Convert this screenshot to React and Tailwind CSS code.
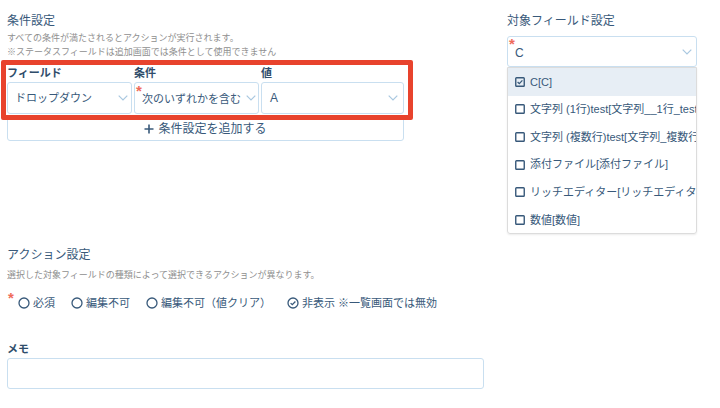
import React from "react";

const Chevron = ({ className = "" }) => (
  <svg width="10" height="6" viewBox="0 0 10 6" className={className}>
    <polyline points="0.7,0.7 5,5 9.3,0.7" fill="none" stroke="#a9c8e0" strokeWidth="1.2" />
  </svg>
);

const Asterisk = ({ className = "" }) => (
  <span className={"absolute text-[#ef6b5b] text-[15px] leading-[15px] font-bold font-['Liberation_Sans',sans-serif] " + className}>*</span>
);

const Radio = () => (
  <svg width="12" height="12" viewBox="0 0 12 12">
    <circle cx="6" cy="6" r="5" fill="none" stroke="#38597a" strokeWidth="1.3" />
  </svg>
);

const CheckCircle = () => (
  <svg width="12" height="12" viewBox="0 0 12 12">
    <circle cx="6" cy="6" r="5" fill="none" stroke="#38597a" strokeWidth="1.3" />
    <polyline points="3.6,6.1 5.3,7.7 8.4,4.5" fill="none" stroke="#38597a" strokeWidth="1.3" />
  </svg>
);

const Box = ({ checked }) => (
  <svg width="10" height="10" viewBox="0 0 10 10" className="shrink-0">
    <rect x="0.75" y="0.75" width="8.5" height="8.5" rx="0.8" fill="none" stroke="#38597a" strokeWidth="1.4" />
    {checked && <polyline points="2.6,5 4.3,6.6 7.4,3.4" fill="none" stroke="#38597a" strokeWidth="1.3" />}
  </svg>
);

const items = [
  { t: "C[C]", c: true },
  { t: "文字列 (1行)test[文字列__1行_test]" },
  { t: "文字列 (複数行)test[文字列_複数行_test]" },
  { t: "添付ファイル[添付ファイル]" },
  { t: "リッチエディター[リッチエディター]" },
  { t: "数値[数値]" },
];

export default function App() {
  return (
    <div className="relative w-[720px] h-[408px] bg-white overflow-hidden flex font-['Liberation_Sans','Noto_Sans_CJK_JP',sans-serif] text-[#38597a]">
      {/* Left column */}
      <div className="w-[484px] pl-[7px] pt-[11px] flex flex-col">
        <div className="text-[12px] leading-[20px]">条件設定</div>
        <div className="text-[9px] leading-[14px] text-[#8f8f8f]">
          すべての条件が満たされるとアクションが実行されます。
          <br />
          ※ステータスフィールドは追加画面では条件として使用できません
        </div>

        <div className="mt-[6px] w-[397px]">
          <div className="flex gap-[2px] h-[16px] text-[11px] leading-[16px] font-bold text-[#2f4d6b]">
            <div className="w-[125px]">フィールド</div>
            <div className="w-[125px]">条件</div>
            <div className="w-[143px]">値</div>
          </div>
          <div className="mt-[1px] flex gap-[2px] text-[11px]">
            <div className="w-[125px] h-[32px] border border-[#c9dff0] rounded-[3px] flex items-center justify-between pl-[7px] pr-[3px]">
              <span>ドロップダウン</span>
              <Chevron />
            </div>
            <div className="relative w-[125px] h-[32px] border border-[#c9dff0] rounded-[3px] flex items-center justify-between pl-[7px] pr-[2px]">
              <Asterisk className="left-[1px] top-[0px]" />
              <span className="pt-[2px]">次のいずれかを含む</span>
              <Chevron />
            </div>
            <div className="w-[143px] h-[32px] border border-[#c9dff0] rounded-[3px] flex items-center justify-between pl-[8px] pr-[5px] text-[12px]">
              <span>A</span>
              <Chevron />
            </div>
          </div>
          <div className="mt-[2px] h-[25px] w-full border border-[#c9dff0] rounded-[3px] flex items-center justify-center gap-[4px] text-[12px]">
            <svg width="10" height="10" viewBox="0 0 10 10">
              <path d="M5 0.5v9M0.5 5h9" stroke="#38597a" strokeWidth="1.6" />
            </svg>
            <span>条件設定を追加する</span>
          </div>
        </div>

        <div className="mt-[104px] text-[12px] leading-[20px]">アクション設定</div>
        <div className="mt-[3px] text-[9px] leading-[14px] text-[#8f8f8f]">
          選択した対象フィールドの種類によって選択できるアクションが異なります。
        </div>
        <div className="relative mt-[13px] h-[16px] flex items-center gap-[16px] pl-[11px] text-[11px] leading-[16px]">
          <Asterisk className="left-[1px] top-[-5px]" />
          <div className="flex items-center gap-[3px]">
            <Radio />
            <span>必須</span>
          </div>
          <div className="flex items-center gap-[3px]">
            <Radio />
            <span>編集不可</span>
          </div>
          <div className="flex items-center gap-[3px]">
            <Radio />
            <span>編集不可（値クリア）</span>
          </div>
          <div className="flex items-center gap-[3px]">
            <CheckCircle />
            <span>非表示 ※一覧画面では無効</span>
          </div>
        </div>

        <div className="mt-[30px] text-[11px] leading-[16px] font-bold text-[#2f4d6b]">メモ</div>
        <div className="mt-[1px] w-[477px] h-[31px] border border-[#c9dff0] rounded-[3px]" />
      </div>

      {/* Right column */}
      <div className="ml-[23px] w-[190px] pt-[11px] flex flex-col">
        <div className="text-[12px] leading-[20px]">対象フィールド設定</div>
        <div className="relative mt-[5px] h-[31px] border border-[#c9dff0] rounded-[3px] flex items-center justify-between pl-[7px] pr-[4px] text-[12px]">
          <Asterisk className="left-[1px] top-[-1px]" />
          <span className="pt-[2px]">C</span>
          <Chevron />
        </div>
        <div className="h-[167px] border border-[#dcdcdc] rounded-b-[3px] shadow-[0_1px_2px_rgba(0,0,0,0.08)] overflow-hidden">
          {items.map((it, i) => (
            <div
              key={i}
              className={
                "h-[27.6px] flex items-center gap-[5px] pl-[7px] text-[11px] whitespace-nowrap " +
                (it.c ? "bg-[#e7eef5]" : "")
              }
            >
              <Box checked={it.c} />
              <span>{it.t}</span>
            </div>
          ))}
        </div>
      </div>

      {/* Red highlight overlay */}
      <div className="absolute left-[1px] top-[60px] w-[412px] h-[60px] border-[5px] border-[#e8432d] rounded-[2px] pointer-events-none" />
    </div>
  );
}
